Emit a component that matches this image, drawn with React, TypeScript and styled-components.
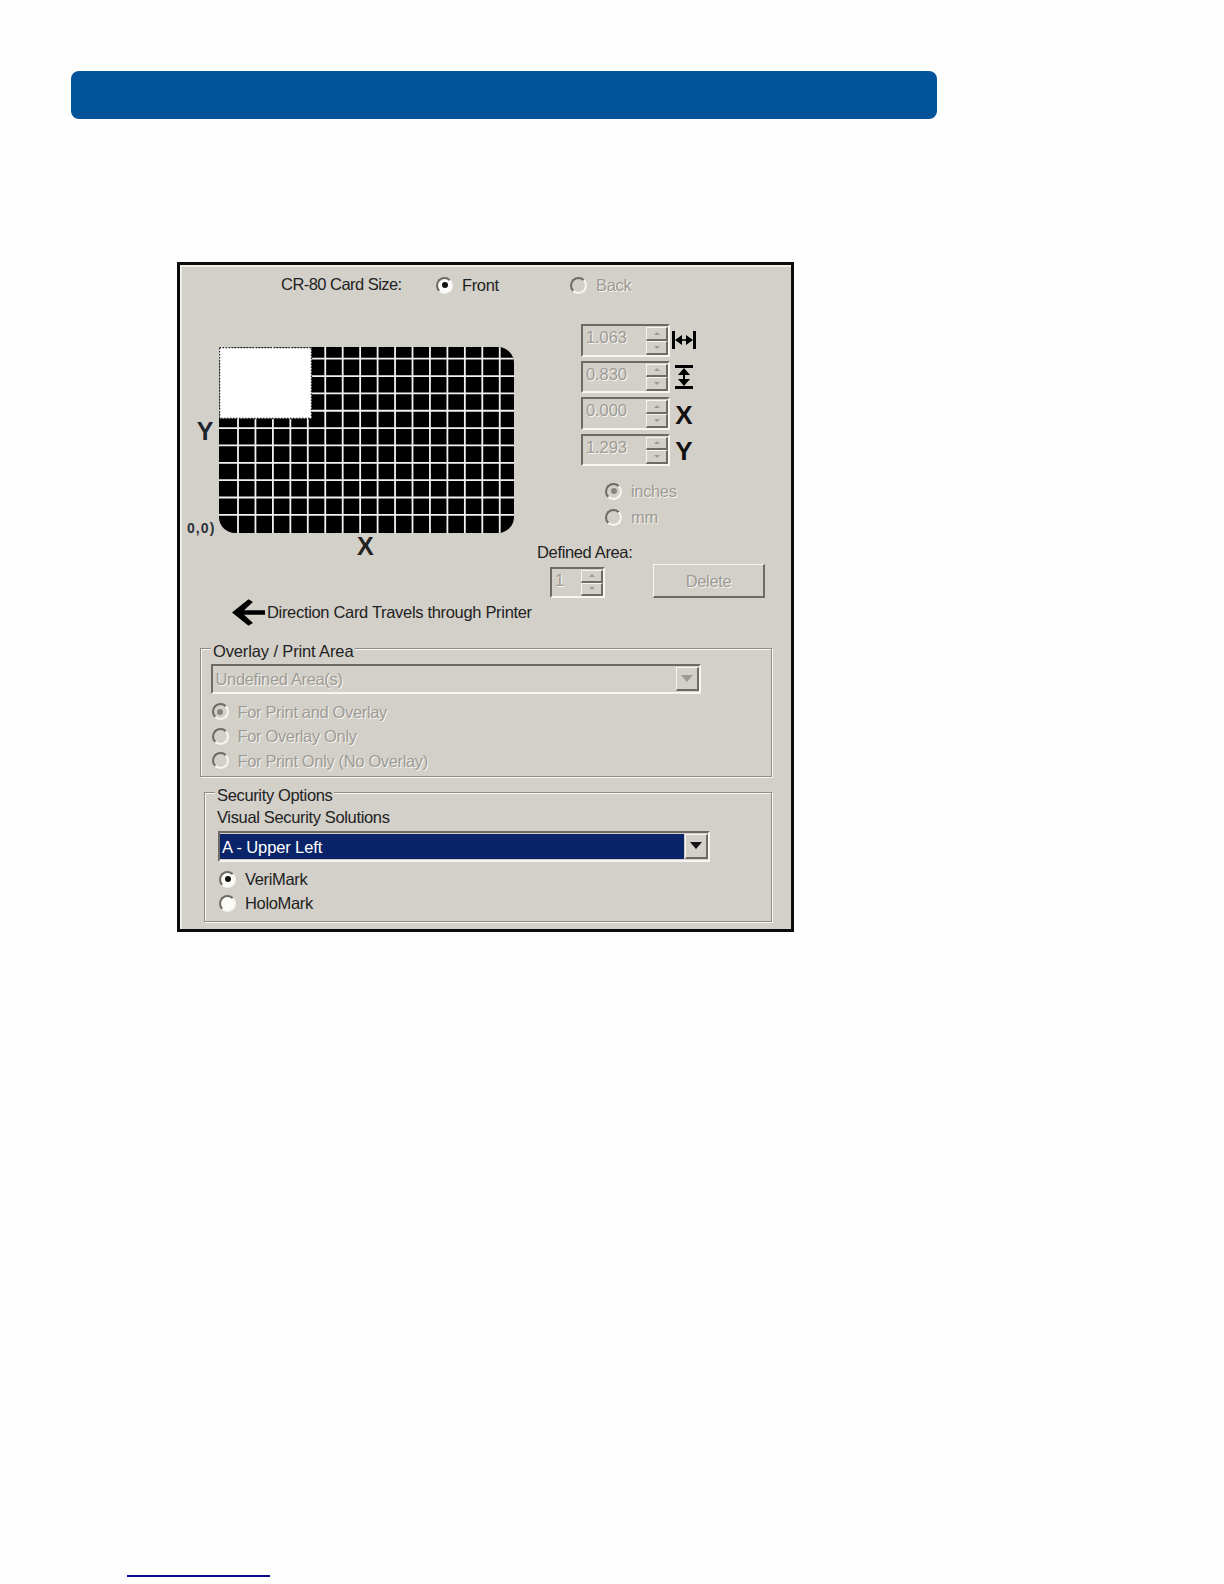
import React from 'react'
import styled, { createGlobalStyle } from 'styled-components'

const FACE = '#d3d0c9'
const DARK = '#6d6b66'
const LIGHT = '#f6f5f1'
const MUTED = '#9d9b95'
const INK = '#222222'

const GlobalStyle = createGlobalStyle`
  html, body {
    margin: 0;
    padding: 0;
    background: #fefefe;
  }
  body {
    font-family: 'Liberation Sans', Arial, sans-serif;
  }
`

const Page = styled.div`
  width: 1224px;
  height: 1584px;
  padding-top: 71px;
  box-sizing: border-box;
  overflow: hidden;
`

const HeaderBar = styled.div`
  width: 866px;
  height: 48px;
  margin-left: 71px;
  border-radius: 8px;
  background: #03539b;
`

const Dialog = styled.div`
  width: 617px;
  height: 670px;
  margin: 143px 0 0 177px;
  box-sizing: border-box;
  border: 3px solid #0c0c0c;
  background: ${FACE};
  box-shadow: inset 2px 2px 0 #efeee9;
  color: ${INK};
  font-size: 16.5px;
  letter-spacing: -0.35px;
  line-height: 24px;
`

const Label = styled.span<{ $disabled?: boolean }>`
  white-space: nowrap;
  color: ${(props) => (props.$disabled ? MUTED : INK)};
  text-shadow: ${(props) => (props.$disabled ? `1px 1px 0 ${LIGHT}` : 'none')};
`

const SizeRow = styled.div`
  display: flex;
  align-items: center;
  height: 24px;
  margin-top: 8px;
  padding-left: 101px;
`

const SizeLabel = styled.span`
  width: 155px;
  flex: none;
  margin-top: -2px;
  letter-spacing: -0.54px;
  white-space: nowrap;
`

const FrontOption = styled.div`
  width: 134px;
  flex: none;
`

const RadioOption = styled.div<{ $height?: number }>`
  display: flex;
  align-items: center;
  gap: 9px;
  height: ${(props) => props.$height ?? 24}px;
`

const RadioMark = styled.span<{ $checked?: boolean; $disabled?: boolean }>`
  position: relative;
  flex: none;
  width: 17px;
  height: 17px;
  box-sizing: border-box;
  border-radius: 50%;
  border: 2px solid;
  border-color: ${DARK} ${LIGHT} ${LIGHT} ${DARK};
  background: ${(props) => (props.$disabled ? FACE : '#fbfbfa')};

  &::after {
    content: '';
    display: ${(props) => (props.$checked ? 'block' : 'none')};
    position: absolute;
    left: 3.5px;
    top: 3.5px;
    width: 6px;
    height: 6px;
    border-radius: 50%;
    background: ${(props) => (props.$disabled ? '#85837e' : '#111')};
  }
`

const MidSection = styled.div`
  display: flex;
  height: 304px;
  margin-top: 27px;
`

const CardColumn = styled.div`
  width: 357px;
  flex: none;
`

const CardRow = styled.div`
  display: flex;
  height: 186px;
  margin-top: 23px;
`

const AxisColumn = styled.div`
  display: flex;
  flex-direction: column;
  align-items: flex-end;
  width: 38.5px;
  flex: none;
  padding-right: 5px;
  box-sizing: border-box;
`

const AxisLetter = styled.span`
  font-size: 25px;
  font-weight: 700;
  letter-spacing: 0;
  line-height: 24px;
`

const AxisY = styled(AxisLetter)`
  margin-top: 72px;
  color: #1c2430;
`

const Origin = styled.span`
  margin: auto -2px 0 0;
  font-size: 14px;
  font-weight: 700;
  letter-spacing: 1.1px;
  line-height: 18px;
  transform: translateY(4px);
  color: #2b3038;
`

const AxisX = styled(AxisLetter)`
  display: block;
  height: 24px;
  margin: 1px 0 0 177px;
`

const DirectionRow = styled.div`
  display: flex;
  align-items: center;
  gap: 2px;
  height: 30px;
  margin: 39px 0 0 52px;
  letter-spacing: -0.32px;
`

const ControlColumn = styled.div`
  flex: 1;
  display: flex;
  flex-direction: column;
`

const SpinRow = styled.div`
  display: flex;
  align-items: center;
  gap: 2px;
  height: 32.5px;
  margin: 0 0 4px 44px;
`

const SpinField = styled.div<{ $width: number; $height: number }>`
  display: flex;
  justify-content: space-between;
  width: ${(props) => props.$width}px;
  height: ${(props) => props.$height}px;
  flex: none;
  box-sizing: border-box;
  padding: 1px 0 0 3px;
  border: 2px solid;
  border-color: ${DARK} ${LIGHT} ${LIGHT} ${DARK};
  color: ${MUTED};
  text-shadow: 1px 1px 0 ${LIGHT};
  font-size: 16.5px;
  letter-spacing: -0.1px;
  line-height: 21px;
`

const SpinButtons = styled.div`
  display: flex;
  flex-direction: column;
  width: 22px;
  flex: none;
`

const SpinButton = styled.span`
  display: flex;
  align-items: center;
  justify-content: center;
  flex: 1;
  box-sizing: border-box;
  border-style: solid;
  border-width: 1px 2px 2px 1px;
  border-color: ${LIGHT} ${DARK} ${DARK} ${LIGHT};
  background: ${FACE};

  &::after {
    content: '';
    border-left: 3px solid transparent;
    border-right: 3px solid transparent;
  }
`

const SpinUp = styled(SpinButton)`
  &::after {
    border-bottom: 3px solid ${MUTED};
  }
`

const SpinDown = styled(SpinButton)`
  &::after {
    border-top: 3px solid ${MUTED};
  }
`

const SpinIcon = styled.div<{ $shift?: number }>`
  display: flex;
  justify-content: center;
  width: 24px;
  font-size: 26px;
  font-weight: 700;
  letter-spacing: 0;
  line-height: 26px;
  color: #111;
  padding-top: ${(props) => props.$shift ?? 0}px;
`

const UnitGroup = styled.div`
  display: flex;
  flex-direction: column;
  gap: 2px;
  margin: 9px 0 0 68px;
`

const DefinedLabel = styled.span`
  display: block;
  height: 24px;
  margin-top: 11px;
  white-space: nowrap;
`

const DefinedRow = styled.div`
  display: flex;
  align-items: flex-end;
  height: 34px;
  margin-left: 13px;
`

const DeleteButton = styled.div`
  display: flex;
  align-items: center;
  justify-content: center;
  width: 112px;
  height: 34px;
  margin-left: 48px;
  box-sizing: border-box;
  border-style: solid;
  border-width: 1px 2px 2px 1px;
  border-color: ${LIGHT} ${DARK} ${DARK} ${LIGHT};
  color: ${MUTED};
  text-shadow: 1px 1px 0 ${LIGHT};
`

const GroupBox = styled.div<{ $left: number; $top: number; $width: number; $height: number }>`
  position: relative;
  width: ${(props) => props.$width}px;
  height: ${(props) => props.$height}px;
  margin: ${(props) => props.$top}px 0 0 ${(props) => props.$left}px;
  box-sizing: border-box;
  border: 1px solid #8f8d87;
  box-shadow: 1px 1px 0 ${LIGHT}, inset 1px 1px 0 ${LIGHT};
`

const GroupLegend = styled.span<{ $left: number; $spacing: number }>`
  position: absolute;
  left: ${(props) => props.$left}px;
  top: -9px;
  padding: 0 2px;
  background: ${FACE};
  letter-spacing: ${(props) => props.$spacing}px;
  line-height: 22px;
  white-space: nowrap;
`

const GroupBody = styled.div<{ $left: number; $top: number }>`
  padding: ${(props) => props.$top}px 0 0 ${(props) => props.$left}px;
`

const ComboBox = styled.div<{ $width: number }>`
  display: flex;
  width: ${(props) => props.$width}px;
  height: 30.5px;
  box-sizing: border-box;
  padding: 1px 0;
  border: 2px solid;
  border-color: ${DARK} ${LIGHT} ${LIGHT} ${DARK};
`

const ComboText = styled.div<{ $selected?: boolean }>`
  flex: 1;
  padding-left: 3px;
  margin-right: 1px;
  line-height: 24px;
  letter-spacing: ${(props) => (props.$selected ? '-0.12px' : 'inherit')};
  background: ${(props) => (props.$selected ? '#0a246a' : 'transparent')};
  color: ${(props) => (props.$selected ? '#fff' : MUTED)};
  text-shadow: ${(props) => (props.$selected ? 'none' : `1px 1px 0 ${LIGHT}`)};
`

const SelectedText = styled.span`
  display: block;
  margin: 1px 0 0 -1px;
`

const ComboArrow = styled.div<{ $disabled?: boolean }>`
  display: flex;
  align-items: center;
  justify-content: center;
  width: 23px;
  flex: none;
  box-sizing: border-box;
  border-style: solid;
  border-width: 1px 2px 2px 1px;
  border-color: ${LIGHT} ${DARK} ${DARK} ${LIGHT};
  background: ${FACE};

  &::after {
    content: '';
    border-left: 6px solid transparent;
    border-right: 6px solid transparent;
    border-top: 7px solid ${(props) => (props.$disabled ? MUTED : '#111')};
  }
`

const OptionStack = styled.div`
  display: flex;
  flex-direction: column;
  margin: 5.5px 0 0 1px;
`

const SolutionsLabel = styled.span`
  display: block;
  height: 24px;
  margin: 0 0 1px -1px;
  transform: translateY(-1px);
  white-space: nowrap;
`

const SecurityBody = styled.div`
  padding: 13px 0 0 13px;
`

const FooterRule = styled.div`
  width: 143px;
  height: 2px;
  margin: 643px 0 0 127px;
  background: #0b0b8c;
`

const GRID_X = Array.from({ length: 16 }, (_, k) => 19 + 17.45 * k)
const GRID_Y = Array.from({ length: 10 }, (_, k) => 11.7 + 17.35 * k)

const CardPreview = () => (
  <svg width="295" height="186" viewBox="0 0 295 186">
    <clipPath id="card-shape">
      <rect x="0" y="0" width="295" height="186" rx="16" />
    </clipPath>
    <rect x="0" y="0" width="295" height="186" rx="16" fill="#000" />
    <g clipPath="url(#card-shape)">
      {GRID_X.map((x) => (
        <line key={x} x1={x} y1="0" x2={x} y2="186" stroke="#f2f2ef" strokeWidth="1.8" />
      ))}
      {GRID_Y.map((y) => (
        <line key={y} x1="0" y1={y} x2="295" y2={y} stroke="#f2f2ef" strokeWidth="1.8" />
      ))}
    </g>
    <rect x="0.5" y="0.5" width="92" height="71" fill="#fff" stroke="#222" strokeWidth="1.4" strokeDasharray="1.5 1.5" />
  </svg>
)

const WidthIcon = () => (
  <svg width="24" height="18" viewBox="0 0 24 18">
    <path d="M1.5 0v18M22.5 0v18" stroke="#000" strokeWidth="3" />
    <path d="M4 9h16" stroke="#000" strokeWidth="1.6" />
    <path d="M3 9l7-5v10zM21 9l-7-5v10z" fill="#000" />
  </svg>
)

const HeightIcon = () => (
  <svg width="18" height="24" viewBox="0 0 18 24">
    <path d="M0 1.5h18M0 22.5h18" stroke="#000" strokeWidth="3" />
    <path d="M9 4v16" stroke="#000" strokeWidth="2" />
    <path d="M9 3l6 7H3zM9 21l6-7H3z" fill="#000" />
  </svg>
)

const DirectionArrow = () => (
  <svg width="33" height="29" viewBox="0 0 30 26">
    <path d="M0 13L15 1l4 2.500-8 7.500h19v4H11l8 7.500-4 2.500z" fill="#000" />
  </svg>
)

const Spinner = ({ value, width, height }: { value: string; width: number; height: number }) => (
  <SpinField $width={width} $height={height}>
    {value}
    <SpinButtons>
      <SpinUp />
      <SpinDown />
    </SpinButtons>
  </SpinField>
)

const Radio = ({ label, checked, disabled, height }: { label: string; checked?: boolean; disabled?: boolean; height?: number }) => (
  <RadioOption $height={height}>
    <RadioMark $checked={checked} $disabled={disabled} />
    <Label $disabled={disabled}>{label}</Label>
  </RadioOption>
)

const App = () => (
  <Page>
    <GlobalStyle />
    <HeaderBar />
    <Dialog>
      <SizeRow>
        <SizeLabel>CR-80 Card Size:</SizeLabel>
        <FrontOption>
          <Radio label="Front" checked />
        </FrontOption>
        <Radio label="Back" disabled />
      </SizeRow>
      <MidSection>
        <CardColumn>
          <CardRow>
            <AxisColumn>
              <AxisY>Y</AxisY>
              <Origin>0,0)</Origin>
            </AxisColumn>
            <CardPreview />
          </CardRow>
          <AxisX>X</AxisX>
          <DirectionRow>
            <DirectionArrow />
            <Label>Direction Card Travels through Printer</Label>
          </DirectionRow>
        </CardColumn>
        <ControlColumn>
          <SpinRow>
            <Spinner value="1.063" width={89} height={32.5} />
            <SpinIcon>
              <WidthIcon />
            </SpinIcon>
          </SpinRow>
          <SpinRow>
            <Spinner value="0.830" width={89} height={32.5} />
            <SpinIcon>
              <HeightIcon />
            </SpinIcon>
          </SpinRow>
          <SpinRow>
            <Spinner value="0.000" width={89} height={32.5} />
            <SpinIcon $shift={3}>X</SpinIcon>
          </SpinRow>
          <SpinRow>
            <Spinner value="1.293" width={89} height={32.5} />
            <SpinIcon $shift={3}>Y</SpinIcon>
          </SpinRow>
          <UnitGroup>
            <Radio label="inches" checked disabled />
            <Radio label="mm" disabled />
          </UnitGroup>
          <DefinedLabel>Defined Area:</DefinedLabel>
          <DefinedRow>
            <Spinner value="1" width={55} height={31.5} />
            <DeleteButton>Delete</DeleteButton>
          </DefinedRow>
        </ControlColumn>
      </MidSection>
      <GroupBox $left={20} $top={20} $width={572} $height={129}>
        <GroupLegend $left={10} $spacing={-0.13}>Overlay / Print Area</GroupLegend>
        <GroupBody $left={9.5} $top={14.5}>
          <ComboBox $width={490}>
            <ComboText>Undefined Area(s)</ComboText>
            <ComboArrow $disabled />
          </ComboBox>
          <OptionStack>
            <Radio label="For Print and Overlay" checked disabled height={24.5} />
            <Radio label="For Overlay Only" disabled height={24.5} />
            <Radio label="For Print Only (No Overlay)" disabled height={24.5} />
          </OptionStack>
        </GroupBody>
      </GroupBox>
      <GroupBox $left={24} $top={15} $width={568} $height={130}>
        <GroupLegend $left={10} $spacing={-0.35}>Security Options</GroupLegend>
        <SecurityBody>
          <SolutionsLabel>Visual Security Solutions</SolutionsLabel>
          <ComboBox $width={492}>
            <ComboText $selected>
              <SelectedText>A - Upper Left</SelectedText>
            </ComboText>
            <ComboArrow />
          </ComboBox>
          <OptionStack>
            <Radio label="VeriMark" checked />
            <Radio label="HoloMark" />
          </OptionStack>
        </SecurityBody>
      </GroupBox>
    </Dialog>
    <FooterRule />
  </Page>
)

export default App
